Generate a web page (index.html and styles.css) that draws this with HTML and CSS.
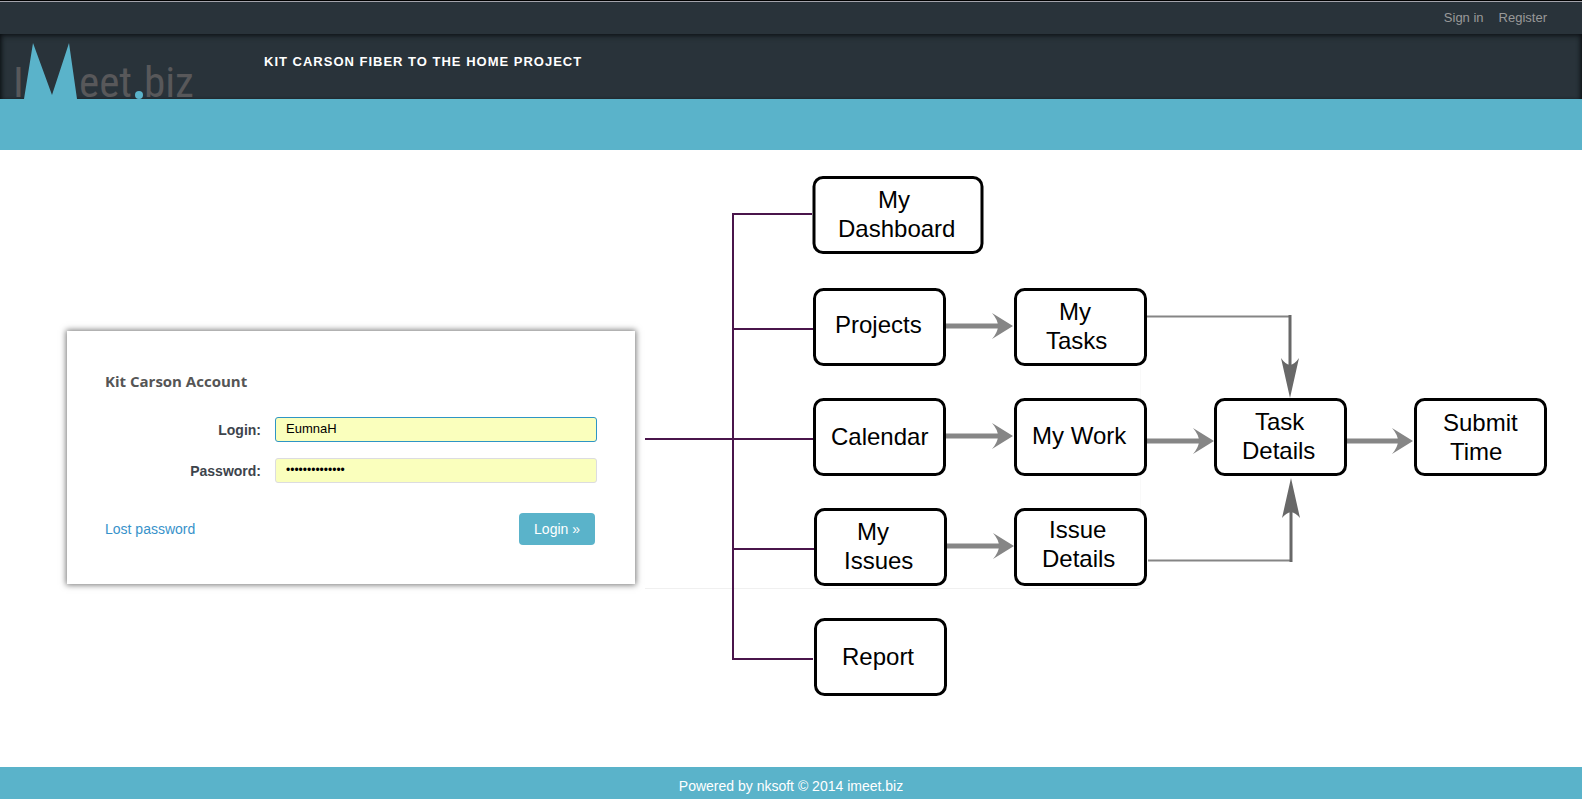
FILE: index.html
```html
<!DOCTYPE html>
<html lang="en">
<head>
<meta charset="utf-8">
<title>Kit Carson Fiber to the Home Project</title>
<link rel="stylesheet" href="styles.css">
</head>
<body class="page">
<nav class="topbar">
  <a class="topbar-link" href="#signin">Sign in</a>
  <a class="topbar-link" href="#register">Register</a>
</nav>
<header class="header">
  <svg class="logo" viewBox="0 0 200 65" role="img" aria-label="IMeet.biz">
    <text class="logo-text" x="13" y="63">I</text>
    <polygon class="logo-accent" points="24,65 33,9 52,61 69,9 77,65"/>
    <text class="logo-text" x="79" y="63">eet</text>
    <circle class="logo-accent" cx="139" cy="61" r="4"/>
    <text class="logo-text" x="144" y="63">biz</text>
  </svg>
  <h1 class="title">KIT CARSON FIBER TO THE HOME PROJECT</h1>
</header>
<div class="band"></div>
<main class="main">
  <div class="login-column">
    <form class="card">
      <h2 class="card-title">Kit Carson Account</h2>
      <div class="field">
        <label class="label" for="login">Login:</label>
        <input class="input" id="login" type="text" value="EumnaH" autofocus>
      </div>
      <div class="field">
        <label class="label" for="password">Password:</label>
        <input class="input input-password" id="password" type="password" value="abcdefghijklmn">
      </div>
      <div class="actions">
        <a class="lost" href="#lost">Lost password</a>
        <button class="button" type="submit">Login »</button>
      </div>
    </form>
  </div>
  <svg class="diagram" viewBox="645 150 937 617" role="img" aria-label="Workflow">
    <defs>
      <g id="arrow">
        <path class="shaft" d="M-2 0H55"/>
        <path class="head" d="M66 0L45 -13Q51 -6 51 0Q51 6 45 13Z"/>
      </g>
    </defs>
    <path class="guide" d="M645 588.5H1140"/>
    <path class="guide-faint" d="M1140.500 588V366"/>
    <path class="branch" d="M645 439H813M812 214H733V659H813M733 329H813M733 549H814"/>
    <use href="#arrow" x="947" y="326"/>
    <use href="#arrow" x="947" y="436"/>
    <use href="#arrow" x="948" y="546"/>
    <use href="#arrow" x="1148" y="441"/>
    <use href="#arrow" x="1347" y="441"/>
    <path class="elbow" d="M1147 316.500H1290M1148 560.500H1291"/>
    <path class="drop" d="M1290 315V368M1291 562V512"/>
    <path class="dark-head" d="M1290 398L1281 358Q1285 364 1290 365Q1295 364 1299 358Z"/>
    <path class="dark-head" d="M1291 478L1282 518Q1286 513 1291 512Q1296 513 1300 518Z"/>
    <g class="node">
      <rect x="814" y="177.500" width="168" height="75" rx="9"/>
      <rect x="814.500" y="289.500" width="130" height="75" rx="9"/>
      <rect x="814.500" y="399.500" width="130" height="75" rx="9"/>
      <rect x="815.500" y="509.500" width="130" height="75" rx="9"/>
      <rect x="815.500" y="619.500" width="130" height="75" rx="9"/>
      <rect x="1015.500" y="289.500" width="130" height="75" rx="9"/>
      <rect x="1015.500" y="399.500" width="130" height="75" rx="9"/>
      <rect x="1015.500" y="509.500" width="130" height="75" rx="9"/>
      <rect x="1215.500" y="399.500" width="130" height="75" rx="9"/>
      <rect x="1415.500" y="399.500" width="130" height="75" rx="9"/>
    </g>
    <g class="node-text">
      <text x="878" y="208">My</text><text x="838" y="237">Dashboard</text>
      <text x="835" y="333">Projects</text>
      <text x="831" y="445">Calendar</text>
      <text x="857" y="540">My</text><text x="844" y="569">Issues</text>
      <text x="842" y="665">Report</text>
      <text x="1059" y="320">My</text><text x="1046" y="349">Tasks</text>
      <text x="1032" y="444">My Work</text>
      <text x="1049" y="538">Issue</text><text x="1042" y="567">Details</text>
      <text x="1255" y="430">Task</text><text x="1242" y="459">Details</text>
      <text x="1443" y="431">Submit</text><text x="1450" y="460">Time</text>
    </g>
  </svg>
</main>
<footer class="footer">Powered by nksoft © 2014 imeet.biz</footer>
</body>
</html>
```
FILE: styles.css
```css
* { box-sizing: border-box; }

.page {
  display: flex;
  flex-direction: column;
  min-height: 100vh;
  margin: 0;
  padding-right: 2px;
  background: #fff;
  font: 14px/20px "Liberation Sans", Arial, sans-serif;
}

.topbar {
  display: flex;
  justify-content: flex-end;
  align-items: center;
  gap: 15px;
  height: 34px;
  padding-right: 35px;
  border-top: 1px solid #000;
  background: #29333a;
  box-shadow: inset 0 1px #a3a3ab;
  font-size: 13px;
}
.topbar-link { color: #999; text-decoration: none; }

.header {
  display: flex;
  align-items: flex-start;
  gap: 64px;
  height: 65px;
  background: #29333a;
  box-shadow: inset 0 4px 6px -3px #0b0f12, inset 4px 0 5px -3px #0b0f12, inset -4px 0 5px -3px #0b0f12;
}
.logo { width: 200px; height: 65px; overflow: visible; }
.logo-text {
  fill: #58585a;
  font: 400 43px "Roboto Condensed", "Open Sans Condensed", Roboto, sans-serif;
}
.logo-accent { fill: #5ab3ca; }
.title {
  margin: 18px 0 0;
  color: #fff;
  font-size: 13px;
  line-height: 20px;
  letter-spacing: 1px;
}

.band { height: 51px; background: #5ab3ca; }

.main {
  display: grid;
  grid-template-columns: 645fr 937fr;
  align-items: center;
  flex: 1;
}
.login-column { padding: 0 10px 2px 67px; }

.card {
  padding: 40px 38px 39px;
  background: #fff;
  box-shadow: 0 0 6px 1px #777;
}
.card-title {
  margin: 0 0 26px;
  color: #555;
  font: 700 15px/20px "Trebuchet MS", "Open Sans", sans-serif;
}
.field {
  display: grid;
  grid-template-columns: 156px 1fr;
  align-items: center;
  gap: 14px;
  margin-bottom: 16px;
}
.label { color: #3d444c; font-weight: 700; text-align: right; }
.input {
  width: 100%;
  height: 25px;
  padding: 0 10px 2px;
  border: 1px solid #dcdce0;
  border-radius: 3px;
  outline: none;
  background: #faffbd;
  color: #000;
  font: 13px "Liberation Sans", Arial, sans-serif;
}
.input-password { font-size: 12px; }
.input:focus { border-color: #2e95c5; }
.actions {
  display: flex;
  align-items: center;
  justify-content: space-between;
  margin-top: 30px;
  padding-right: 2px;
}
.lost { color: #3792ca; text-decoration: none; }
.button {
  height: 32px;
  padding: 0 15px;
  border: 0;
  border-radius: 4px;
  background: #5ab3ca;
  color: #fff;
  font: 14px "Liberation Sans", Arial, sans-serif;
}

.diagram { display: block; width: 100%; }
.guide { fill: none; stroke: #f0f0f0; }
.guide-faint { fill: none; stroke: #f9f9f9; }
.branch { fill: none; stroke: #4a154b; stroke-width: 2; }
.shaft { fill: none; stroke: #868686; stroke-width: 5; }
.head { fill: #868686; }
.elbow { fill: none; stroke: #858585; stroke-width: 2; }
.drop { fill: none; stroke: #686868; stroke-width: 3; }
.dark-head { fill: #686868; }
.node { fill: #fff; stroke: #000; stroke-width: 3; }
.node-text { fill: #000; font-size: 24px; }

.footer {
  height: 32px;
  padding-top: 9px;
  background: #5ab3ca;
  color: #fff;
  text-align: center;
}
```
